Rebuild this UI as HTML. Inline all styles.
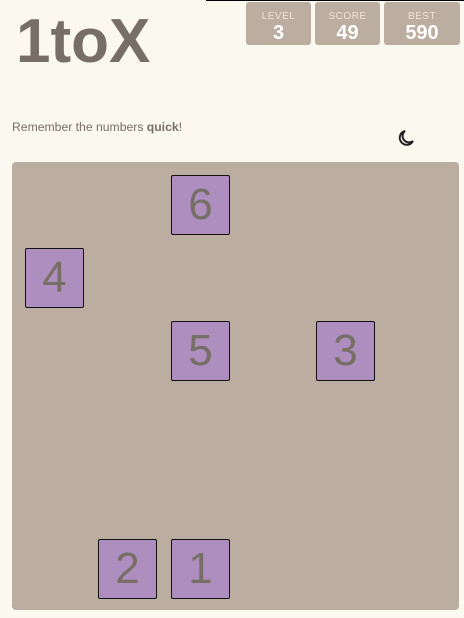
<!DOCTYPE html>
<html><head><style>
body{margin:0;width:464px;height:618px;background:#faf8ef;font-family:"Liberation Sans",sans-serif;position:relative;overflow:hidden}
.line{position:absolute;left:206px;top:0;width:258px;height:1px;background:#000}
h1{position:absolute;left:16px;top:6px;margin:0;font-size:62px;font-weight:bold;color:#776e65;line-height:72px;letter-spacing:0}
.box{position:absolute;top:2px;height:43px;background:#bbada0;border-radius:3px;text-align:center;color:#fff}
.box .l{font-size:10px;color:#eee4da;margin-top:9px;line-height:11px;letter-spacing:.5px}
.box .v{font-size:20px;font-weight:bold;line-height:22px}
.msg{position:absolute;left:12px;top:120px;font-size:12.2px;color:#776e65}
.board{position:absolute;left:12px;top:162px;width:447px;height:448px;background:#bbada0;border-radius:4px}
.t{position:absolute;background:#ad8ebf;border:1px solid #111;border-radius:2px;color:#776e65;font-size:44px;text-align:center;line-height:58px;box-sizing:border-box;width:59px;height:60px}
</style></head><body>
<div class="line"></div>
<h1>1toX</h1>
<div class="box" style="left:246px;width:65px"><div class="l">LEVEL</div><div class="v">3</div></div>
<div class="box" style="left:315px;width:65px"><div class="l">SCORE</div><div class="v">49</div></div>
<div class="box" style="left:384px;width:76px"><div class="l">BEST</div><div class="v">590</div></div>
<div class="msg">Remember the numbers <b>quick</b>!</div>
<svg style="position:absolute;left:396px;top:128px" width="20" height="20" viewBox="0 0 20 20"><path d="M9 3 A7 7 0 1 0 17 13 A6 6 0 0 1 9 3 Z" fill="none" stroke="#222" stroke-width="2"/></svg>
<div class="board"></div>
<div class="t" style="left:171px;top:175px">6</div>
<div class="t" style="left:25px;top:248px">4</div>
<div class="t" style="left:171px;top:321px">5</div>
<div class="t" style="left:316px;top:321px">3</div>
<div class="t" style="left:98px;top:539px">2</div>
<div class="t" style="left:171px;top:539px">1</div>
</body></html>
